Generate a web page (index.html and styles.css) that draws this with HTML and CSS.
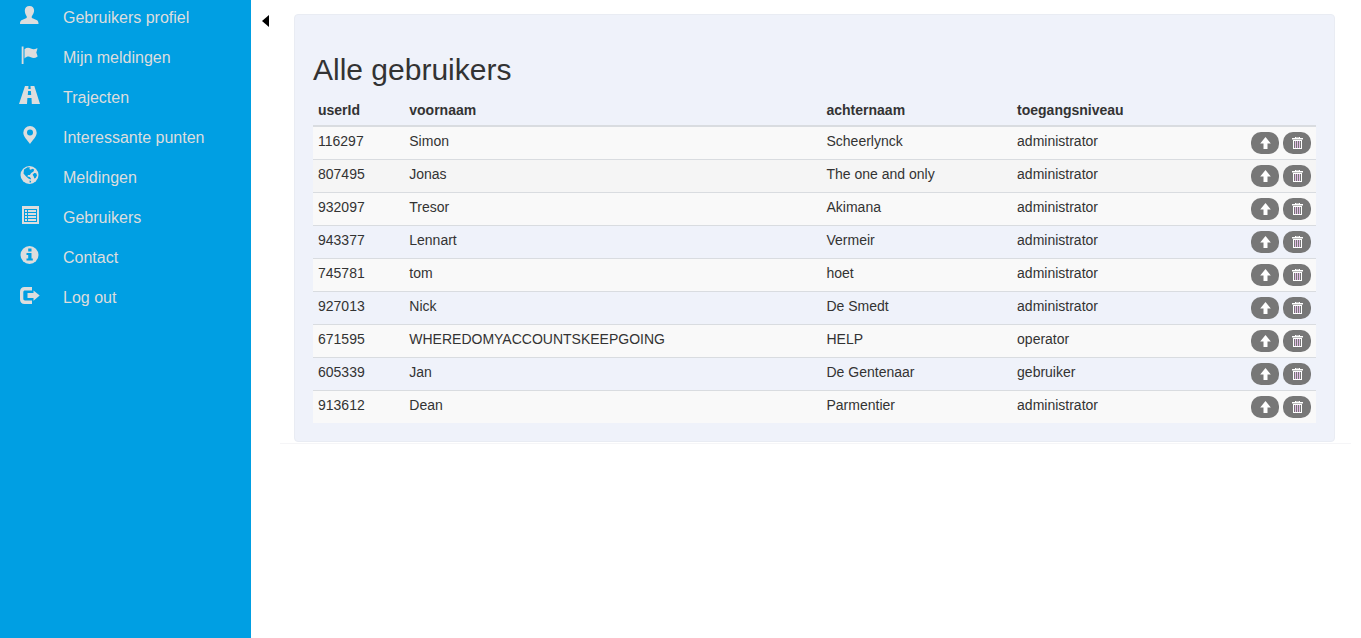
FILE: index.html
```html
<!DOCTYPE html>
<html lang="nl">
<head>
<meta charset="utf-8">
<title>Alle gebruikers</title>
<link rel="stylesheet" href="styles.css">
</head>
<body>
<svg class="defs" aria-hidden="true">
  <symbol id="up" viewBox="0 0 14 14"><path d="M7.500 1l5.300 6.500H9.500V13h-4V7.500H2.200z"/></symbol>
  <symbol id="trash" viewBox="0 0 14 14"><path class="bars" d="M5 5h1v7H5zM7 5h1v7H7zM9 5h1v7H9z"/><path fill-rule="evenodd" d="M5 2V1h5v1h3v1.500H2V2zM6 1.600V2h3v-.4zM3 4h9v9H3zM4 5v7h7V5z"/></symbol>
</svg>
<div class="layout">
  <nav class="sidebar">
    <a class="item" href="#"><svg class="icon" viewBox="0 0 22 20"><path d="M10.500 1c-3 0-4.700 2-4.700 4.600 0 2.200.7 3.900 1.700 5.300.6.800.4 1.900-.5 2.300l-4 1.700C1.500 15.600 1 16.500 1 19h18.500c0-2.500-.5-3.400-2-4.100l-4-1.700c-.9-.4-1.100-1.500-.5-2.300 1-1.400 2.100-3.100 2.100-5.300C15.100 3 13.500 1 10.500 1z"/></svg><span>Gebruikers profiel</span></a>
    <a class="item" href="#"><svg class="icon" viewBox="0 0 22 20"><path d="M2.700 1.500h1.800V19H2.700zM5.500 4.200c2-1.600 4.200-1.700 6.300-.6 2.200 1.100 4 .9 6.300-.3.300-.1.500.1.300.4l-1 3.500c-.1.300-.1.600.1.900l1 3c.1.300 0 .5-.2.700-2.200 1.500-4.300 1.600-6.500.4-2.200-1.100-4.100-.6-6.300 1.200z"/></svg><span>Mijn meldingen</span></a>
    <a class="item" href="#"><svg class="icon" viewBox="0 0 22 20"><path fill-rule="evenodd" d="M6 1h9.300L21 19h-8.200l-.3-6H8.400L8 19H0zM9.500 1l-.2 3h2.400l-.2-3zM9.100 6l-.3 4h3.400l-.3-4z"/></svg><span>Trajecten</span></a>
    <a class="item" href="#"><svg class="icon" viewBox="0 0 22 20"><path fill-rule="evenodd" d="M11 1a6.700 6.700 0 0 0-6.700 6.700C4.300 12 9 15.500 11 19c2-3.500 6.700-7 6.700-11.300A6.700 6.700 0 0 0 11 1zM11 4.500a3 3 0 1 1 0 6 3 3 0 0 1 0-6z"/></svg><span>Interessante punten</span></a>
    <a class="item" href="#"><svg class="icon" viewBox="0 0 22 20"><circle cx="10.500" cy="10" r="9"/><path class="cut" d="M5 4.500l3.500-2.300 2.600.3-.8 1.500 1.500.8 1.400-1 2 .8-.7 1.800-2.300 1.500-1.300 2.200-2-.2-.4 1.500 2.200.6 1.300 1.500-.4 1-2.200-1-2.500-2.300L4.500 8.500z"/><path class="cut" d="M15.200 8l2 .2.800 2.300-1.300 2.500-1.300.5-.8-2.300-1-1.500z"/><path class="cut" d="M10.500 15.500l1.700.5-.5 1.500-1 .2z"/></svg><span>Meldingen</span></a>
    <a class="item" href="#"><svg class="icon" viewBox="0 0 22 20"><path fill-rule="evenodd" d="M3 1h17v18H3zM5 4v13h13V4zM6 5h2v2H6zM9 5h8v2H9zM6 8h2v2H6zM9 8h8v2H9zM6 11h2v2H6zM9 11h8v2H9zM6 14h2v2H6zM9 14h8v2H9z"/></svg><span>Gebruikers</span></a>
    <a class="item" href="#"><svg class="icon" viewBox="0 0 22 20"><circle cx="10.500" cy="10" r="9"/><path class="cut" d="M9.200 3.500h3.300V6.500H9.200zM7.500 8h5v5.500h1.300V15.500H7.500v-2h1.700V10H7.500z"/></svg><span>Contact</span></a>
    <a class="item" href="#"><svg class="icon" viewBox="0 0 22 20"><path d="M13 2H5.500C2.800 2 1 3.800 1 6.500v8C1 17.200 2.800 19 5.500 19H13v-3.500H6c-1 0-1.700-.6-1.700-1.700V7.200c0-1.100.7-1.700 1.700-1.700h7zM14.500 5.500V8H8.500v5h6v2.700l6.200-5.100z"/></svg><span>Log out</span></a>
  </nav>
  <button class="toggle" type="button" aria-label="Menu verbergen"><svg class="arrow" viewBox="0 0 7 12"><path d="M7 0v12L0 6z"/></svg></button>
  <main class="content">
    <section class="well">
      <h2 class="title">Alle gebruikers</h2>
      <table class="users">
        <thead><tr><th class="c-id">userId</th><th class="c-first">voornaam</th><th class="c-last">achternaam</th><th>toegangsniveau</th><th class="c-act"></th></tr></thead>
        <tbody>
          <tr><td>116297</td><td>Simon</td><td>Scheerlynck</td><td>administrator</td><td><div class="actions"><button class="badge" aria-label="Verhoog"><svg class="glyph"><use href="#up"/></svg></button><button class="badge" aria-label="Verwijder"><svg class="glyph"><use href="#trash"/></svg></button></div></td></tr>
          <tr class="hovered"><td>807495</td><td>Jonas</td><td>The one and only</td><td>administrator</td><td><div class="actions"><button class="badge" aria-label="Verhoog"><svg class="glyph"><use href="#up"/></svg></button><button class="badge" aria-label="Verwijder"><svg class="glyph"><use href="#trash"/></svg></button></div></td></tr>
          <tr><td>932097</td><td>Tresor</td><td>Akimana</td><td>administrator</td><td><div class="actions"><button class="badge" aria-label="Verhoog"><svg class="glyph"><use href="#up"/></svg></button><button class="badge" aria-label="Verwijder"><svg class="glyph"><use href="#trash"/></svg></button></div></td></tr>
          <tr><td>943377</td><td>Lennart</td><td>Vermeir</td><td>administrator</td><td><div class="actions"><button class="badge" aria-label="Verhoog"><svg class="glyph"><use href="#up"/></svg></button><button class="badge" aria-label="Verwijder"><svg class="glyph"><use href="#trash"/></svg></button></div></td></tr>
          <tr><td>745781</td><td>tom</td><td>hoet</td><td>administrator</td><td><div class="actions"><button class="badge" aria-label="Verhoog"><svg class="glyph"><use href="#up"/></svg></button><button class="badge" aria-label="Verwijder"><svg class="glyph"><use href="#trash"/></svg></button></div></td></tr>
          <tr><td>927013</td><td>Nick</td><td>De Smedt</td><td>administrator</td><td><div class="actions"><button class="badge" aria-label="Verhoog"><svg class="glyph"><use href="#up"/></svg></button><button class="badge" aria-label="Verwijder"><svg class="glyph"><use href="#trash"/></svg></button></div></td></tr>
          <tr><td>671595</td><td>WHEREDOMYACCOUNTSKEEPGOING</td><td>HELP</td><td>operator</td><td><div class="actions"><button class="badge" aria-label="Verhoog"><svg class="glyph"><use href="#up"/></svg></button><button class="badge" aria-label="Verwijder"><svg class="glyph"><use href="#trash"/></svg></button></div></td></tr>
          <tr><td>605339</td><td>Jan</td><td>De Gentenaar</td><td>gebruiker</td><td><div class="actions"><button class="badge" aria-label="Verhoog"><svg class="glyph"><use href="#up"/></svg></button><button class="badge" aria-label="Verwijder"><svg class="glyph"><use href="#trash"/></svg></button></div></td></tr>
          <tr><td>913612</td><td>Dean</td><td>Parmentier</td><td>administrator</td><td><div class="actions"><button class="badge" aria-label="Verhoog"><svg class="glyph"><use href="#up"/></svg></button><button class="badge" aria-label="Verwijder"><svg class="glyph"><use href="#trash"/></svg></button></div></td></tr>
        </tbody>
      </table>
    </section>
  </main>
</div>
</body>
</html>
```
FILE: styles.css
```css
* { box-sizing: border-box; }
body {
  margin: 0;
  font: 14px/20px "Liberation Sans", Arial, sans-serif;
  color: #333;
  background: #fff;
}
.defs { display: none; }
.layout { display: flex; align-items: flex-start; min-height: 100vh; }
.sidebar {
  flex: 0 0 251px;
  align-self: stretch;
  background: #009fe3;
}
.item {
  display: flex;
  gap: 22px;
  height: 40px;
  padding: 5px 19px;
  font-size: 16px;
  line-height: 26px;
  color: #ddd;
  text-decoration: none;
}
.icon { width: 22px; height: 20px; fill: #ddd; }
.cut { fill: #009fe3; }
.toggle {
  display: flex;
  justify-content: center;
  width: 29px;
  margin: 0;
  padding: 15px 0 0;
  border: 0;
  background: none;
}
.arrow { width: 7px; height: 12px; fill: #000; }
.content {
  flex: 1;
  margin-right: 10px;
  padding: 14px 16px 1px 14px;
  border-bottom: 1px solid #f5f5f7;
}
.well {
  padding: 18px;
  border: 1px solid #e9ecf3;
  border-radius: 4px;
  background: #eff2fa;
}
.title {
  margin: 20px 0 9px;
  font-size: 30px;
  font-weight: 400;
  line-height: 33px;
}
.users { width: 100%; border-spacing: 0; table-layout: fixed; }
.users th, .users td { padding: 5px; text-align: left; vertical-align: top; }
.users th { border-bottom: 2px solid #d9dce0; }
.users td { border-top: 1px solid #d9dce0; line-height: 18px; }
.users tbody tr:first-child td { border-top: 0; }
.users tbody tr:nth-child(odd) { background: #f9f9f9; }
.users .hovered { background: #f5f5f5; }
.c-id { width: 9%; }
.c-first { width: 42%; }
.c-last { width: 19%; }
.c-id { width: 9.1%; }
.c-first { width: 41.6%; }
.c-act { width: 70px; }
.actions { display: flex; gap: 4px; }
.badge {
  display: flex;
  align-items: center;
  justify-content: center;
  width: 28px;
  height: 22px;
  padding: 0;
  border: 0;
  border-radius: 10px;
  background: #777;
}
.glyph { width: 14px; height: 14px; fill: #fff; }
.bars { fill: #e3bfe6; }
```
